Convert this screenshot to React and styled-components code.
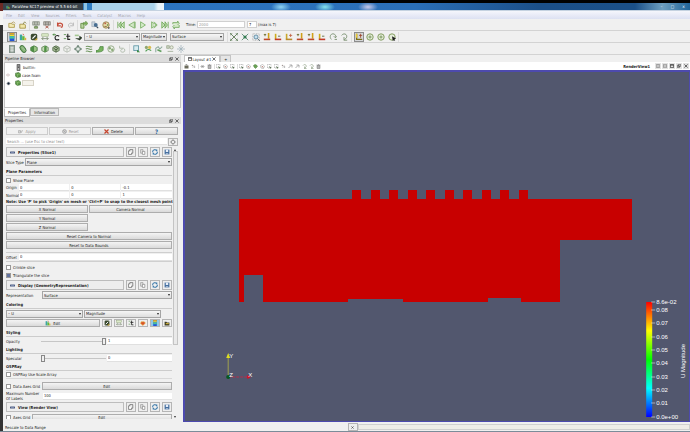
import React, { useState } from 'react';
import styled, { createGlobalStyle, css } from 'styled-components';

const GlobalStyle = createGlobalStyle`
    * {
        box-sizing: border-box;
    }

    body {
        margin: 0;
        overflow: hidden;
    }

    body, button, input, select {
        font-family: "DejaVu Sans Condensed", "DejaVu Sans", sans-serif;
        font-size: 4px;
        line-height: 5px;
        color: #222222;
    }
`;

/* ---------- icons, all on a 10x10 grid ---------- */

const drawings = {
    open: <><path d="M1 8V3h3l1 1h3v4z" fill="#f3e9b4" stroke="#a89545" /><path d="M4 3l3-2 2 2" fill="none" stroke="#b09a55" /></>,
    openUp: <><path d="M1 9V4h6l1 1v4z" fill="#f0e6a8" stroke="#a08c3c" /><path d="M5 4l2-3 2 2" fill="none" stroke="#84803c" /></>,
    connect: <><rect x="1" y="1" width="8" height="4" fill="#d8ddd2" stroke="#7d8479" /><path d="M3 1v4M5 1v4M7 1v4M5 5v2" stroke="#7d8479" /><path d="M3 7h4v2H3z" fill="#98b77a" stroke="#66804f" /></>,
    disconnect: <><rect x="1" y="1" width="8" height="4" fill="#d4d2cc" stroke="#77756d" /><path d="M3 1v4M5 1v4M7 1v4" stroke="#77756d" /><path d="M3 6l4 3M7 6L3 9" stroke="#a54a38" /></>,
    undo: <path d="M2 2v4h4M2 5c2-4 7-2 6 1 0 1-1 2-2 2" fill="none" stroke="#c54d3a" strokeWidth="1.6" />,
    redo: <path d="M8 2v4H4M8 5C6 1 1 3 2 6c0 1 1 2 2 2" fill="none" stroke="#b9b9b9" strokeWidth="1.2" />,
    refresh: <><path d="M1 3h4v6H1z" fill="#b9d5a0" stroke="#61883f" /><path d="M4 5V2h3V0l3 3-3 3V4" fill="#7db057" stroke="#4c7a2f" strokeWidth=".5" /></>,
    find: <><path d="M1 1h4v6H1z" fill="#c9d4de" stroke="#8695a5" strokeWidth=".6" /><circle cx="6" cy="5" r="2.4" fill="#466d91" /><path d="M7 7l2 2" stroke="#334455" strokeWidth="1.4" /></>,
    palette: <><circle cx="5" cy="5" r="4" fill="#e3d6a5" stroke="#907944" /><circle cx="4" cy="3" r="1" fill="#bb5544" /><circle cx="7" cy="5" r="1" fill="#558844" /><path d="M3 7h3" stroke="#7a6030" /><path d="M7 8h3L8.500 10z" fill="#222" /></>,
    first: <path d="M1 1v8M9 1L5 5l4 4zM5 1L2 5l3 4z" fill="#c3dfb4" stroke="#6aa552" />,
    prev: <path d="M8 1v8L1 5zM9 1v8" fill="#d2e6c6" stroke="#78ad62" />,
    play: <path d="M2 1v8l6-4z" fill="#d5ebc9" stroke="#70ab59" />,
    next: <path d="M2 1v8l6-4zM5 1l4 4-4 4" fill="#c9e2ba" stroke="#78ad62" />,
    last: <path d="M9 1v8M1 1l4 4-4 4zM5 1l3 4-3 4z" fill="#c3dfb4" stroke="#6aa552" />,
    loop: <path d="M1 4V2h6V0l2 3-2 2M9 5v3H3v2L1 7l2-2" fill="#d3e8c5" stroke="#70a65b" />,
    bar: <><rect x="2" y="0" width="6" height="10" fill="#2456d6" /><rect x="2" y="0" width="6" height="2" fill="#d8a028" /><rect x="2" y="2" width="6" height="2" fill="#f3dc2c" /><rect x="2" y="4" width="6" height="3" fill="#43c4a0" /></>,
    chart: <><rect x="1" y="2" width="3" height="7" fill="#3ca6a0" /><rect x="4" y="4" width="3" height="5" fill="#62b93d" /><rect x="7" y="6" width="2" height="3" fill="#e0b03a" /><path d="M5 1l1 2" stroke="#cf4f2c" /></>,
    edit: <><rect x="1" y="1" width="8" height="8" rx="2" fill="#3b4a30" /><path d="M3 7l4-4" stroke="#ffffff" strokeWidth="1.6" /><path d="M5 9h4V6z" fill="#c8a53a" /></>,
    range: <><rect x="1" y="1" width="8" height="3" fill="#dcebc9" stroke="#8da276" strokeWidth=".7" /><path d="M1 7h8M3 5L1 7l2 2M7 5l2 2-2 2" fill="none" stroke="#73856a" /></>,
    rangeC: <><path d="M1 2h4M1 2l2-1M1 2l2 1" stroke="#4e8b42" /><path d="M9 4c-3-2-6 0-5 3 0 2 3 2 5 1" fill="none" stroke="#1d1d1d" strokeWidth="1.4" /></>,
    rangeT: <><path d="M1 2h3M1 7h3" stroke="#4e8b42" /><path d="M6 1v7h3M4 4h5" fill="none" stroke="#252525" strokeWidth="1.4" /></>,
    rangeV: <><rect x="1" y="2" width="5" height="2" fill="#a4c791" /><path d="M2 7h5V4l3 2-3 3" fill="#2b3927" stroke="#2b3927" strokeWidth=".7" /></>,
    calc: <><rect x="2" y="0" width="6" height="10" fill="#9faba2" stroke="#6f7f78" /><path d="M3 3h4M3 5h4M3 7h4M5 2v7" stroke="#e8eeea" strokeWidth=".8" /></>,
    contour: <><ellipse cx="5" cy="5" rx="3" ry="5" transform="rotate(-35 5 5)" fill="#75a866" stroke="#3f6f3c" /><path d="M3 3l4 5M4 2l4 5" stroke="#d5e8cb" strokeWidth=".6" /></>,
    clip: <><path d="M1 3l4-2 4 2v4L5 9 1 7z" fill="#9bc484" stroke="#3f7339" /><path d="M5 1v8L1 7V3z" fill="#4e8d46" /></>,
    slice: <><path d="M1 3l4-2 4 2v4L5 9 1 7z" fill="#c8dbbb" stroke="#56814b" /><path d="M4 2l3-1v7L4 9z" fill="#4f9143" /></>,
    threshold: <><path d="M1 3l4-2 4 2v4L5 9 1 7z" fill="#a8bc98" stroke="#526b48" /><path d="M2 4l3 2 3-2M5 6v3M3 2l4 2" stroke="#37502d" fill="none" /></>,
    subset: <path d="M1 3l4-2 4 2v4L5 9 1 7zM1 3l4 2 4-2M5 5v4" fill="#eef0ec" stroke="#a7aea3" strokeWidth=".8" />,
    glyph: <><circle cx="5" cy="5" r="3" fill="#e4ebe6" stroke="#5f7868" /><path d="M5 0v3M5 7v3M0 5h3M7 5h3" stroke="#55705f" strokeWidth="1.4" /></>,
    stream: <path d="M1 2c3-2 5 2 8 0M1 5c3-2 5 2 8 0M1 8c3-2 5 2 8 0" fill="none" stroke="#6f9560" strokeWidth="1.3" />,
    warp: <><path d="M0 7c3 0 4-1 5-5h4v4c0 2-4 3-9 3z" fill="#76b35e" stroke="#3f7a35" strokeWidth=".8" /></>,
    group: <><circle cx="5" cy="5" r="4" fill="#edf2ea" stroke="#859d76" /><circle cx="3.500" cy="4" r="1.500" fill="#87a974" /><circle cx="6.500" cy="6" r="1.500" fill="#87a974" /></>,
    level: <path d="M2 1v3h3M5 4c4-1 5 5 1 5s-3-4 0-4" fill="none" stroke="#a7b4a2" />,
    select: <><rect x="1" y="1" width="6" height="6" fill="#d8ebef" stroke="#5991a0" /><path d="M5 6l4 3H5z" fill="#3d8b42" /></>,
    probe: <><circle cx="3" cy="3" r="2" fill="#91a66f" /><circle cx="7" cy="3" r="2" fill="#d8bc50" /><path d="M2 8c2-3 4-3 7-1" fill="none" stroke="#4d9c50" strokeWidth="1.4" /></>,
    plot: <><path d="M1 9V4l3-2 2 3 3-3" fill="none" stroke="#8ca99c" strokeWidth="1.3" /><path d="M3 6l5 2" stroke="#609e5e" strokeWidth="2" /></>,
    group2: <><rect x="1" y="1" width="3" height="3" fill="#d7ddd0" stroke="#92a182" /><circle cx="7" cy="3" r="2" fill="#e9eddf" stroke="#9ba58c" /><path d="M2 8h7" stroke="#9aa992" /></>,
    cross: <path d="M5 0v10M0 5h10M2 2l6 6M8 2L2 8" stroke="#9fb1ba" strokeWidth=".9" />,
    reset: <><path d="M1 1l8 8M9 1L1 9" stroke="#68835f" strokeWidth="1.2" /><path d="M0 3V0h3M7 0h3v3M10 7v3H7M3 10H0V7" fill="none" stroke="#3f6637" /></>,
    zoomData: <><path d="M1 1l8 8M9 1L1 9" stroke="#63927b" strokeWidth="1.2" /><circle cx="5" cy="5" r="2" fill="#347d52" /></>,
    zoomBox: <><path d="M1 1h8v8H1z" fill="none" stroke="#999999" strokeDasharray="1 1" /><circle cx="5" cy="5" r="2.500" fill="#c8e0ee" stroke="#4f8099" /><path d="M7 7l3 3" stroke="#4c6470" /></>,
    axisA: <><path d="M1 2h3M2.500 1v3" stroke="#666622" /><path d="M7 0v7" stroke="#d0a018" strokeWidth="2" /><path d="M1 8h8" stroke="#bd4a2b" strokeWidth="2" /></>,
    axisB: <><path d="M2 1v7" stroke="#ceac1e" strokeWidth="2" /><path d="M5 4h3" stroke="#4d5a2c" /><path d="M1 8h8" stroke="#c33a28" strokeWidth="2" /></>,
    axisC: <><path d="M2 1v7" stroke="#c9a82c" strokeWidth="2" /><path d="M1 8h8" stroke="#b98a30" strokeWidth="2" /><path d="M5 3h4M7 1v4" stroke="#bf5a3b" /></>,
    rotL: <path d="M7 8h3M3 8C0 5 2 1 5 1s4 3 3 5M6 4l2 2 2-2" fill="none" stroke="#819577" strokeWidth="1.2" />,
    rotR: <path d="M2 3c3-4 8-1 6 3L5 9M5 5v4h4" fill="none" stroke="#819577" strokeWidth="1.2" />,
    axes: <><path d="M2 1v7h7" fill="none" stroke="#7b6e19" strokeWidth="1.6" /><path d="M2 1v5" stroke="#e8c733" strokeWidth="2" /><path d="M5 3h4M7 1v5" stroke="#993d22" /></>,
    center: <><circle cx="5" cy="5" r="4" fill="#e5eddb" stroke="#809a5c" strokeWidth="1.2" /><path d="M3 5h4M5 3v4" stroke="#6b8a4b" /></>,
    pick: <><circle cx="5" cy="5" r="4" fill="#e5eddb" stroke="#809a5c" strokeWidth="1.2" /><path d="M5 4l5 3-2 1 1 2-2-1-1 1z" fill="#1e1e1e" /></>,
    server: <><rect x="3" y="1" width="4" height="8" fill="#bbbbbb" stroke="#333333" /><path d="M4 3h2M4 5h2" stroke="#333333" /></>,
    cube: <><path d="M1 2l5-1 3 2v5L4 9 1 7z" fill="#5e9a48" stroke="#35682a" /><path d="M1 2l3 2v5M4 4l5-1" fill="none" stroke="#a7d08c" strokeWidth=".8" /></>,
    eye: <><path d="M1 5c2-4 6-4 8 0-2 4-6 4-8 0z" fill="#ffffff" stroke="#777777" strokeWidth=".6" /><circle cx="5" cy="5" r="2.400" fill="#142436" /></>,
    hidden: <path d="M1 5c2-3 6-3 8 0-2 3-6 3-8 0z" fill="#ffffff" stroke="#b59a9a" strokeWidth="1.400" />,
    apply: <path d="M1 3h4v5H1zM5 5l2 2 2-5" fill="#d7d7d7" stroke="#9b9b9b" />,
    stop: <><circle cx="5" cy="5" r="4" fill="#cccccc" stroke="#8d8d8d" /><path d="M3 3l4 4" stroke="#8d8d8d" /></>,
    remove: <path d="M1 1l8 8M9 1L1 9" stroke="#c6442c" strokeWidth="2.400" />,
    gear: <><circle cx="5" cy="5" r="3" fill="none" stroke="#888888" strokeWidth="1.500" /><path d="M5 0v2M5 8v2M0 5h2M8 5h2" stroke="#888888" /></>,
    copy: <><path d="M1 3h5v6H1z" fill="#ffffff" stroke="#444444" /><path d="M3 3V1h5v6H6" fill="#eeeeee" stroke="#444444" /></>,
    paste: <><path d="M1 1h4v6H1z" fill="#e4e4e4" stroke="#8b8b8b" /><path d="M4 4h4v5H4z" fill="#ffffff" stroke="#737373" /></>,
    sync: <path d="M1 5c0-4 5-5 7-2V1M9 5c0 4-5 5-7 2v2" fill="none" stroke="#3777a9" strokeWidth="1.700" />,
    save: <><path d="M1 1h8v8H1z" fill="#466f9f" /><path d="M3 1h4v4H3z" fill="#e6eef8" /><path d="M3 7h4v2H3z" fill="#b7c9de" /></>,
    minus: <><rect x="0" y="3" width="10" height="4" rx="1" fill="#4b5a80" /><path d="M2 5h6" stroke="#a9b7d7" /></>,
    heart: <path d="M2 3h5l2 2-4 4-4-3z" fill="#d8502a" stroke="#e5b23a" />,
    folder: <><path d="M1 3h3l1 1h4v5H1z" fill="#3d3c22" /><path d="M3 5h5v2H3z" fill="#c9ab3a" /></>,
    float: <path d="M3 1h6v5H3zM1 4h5v5H1z" fill="#ffffff" stroke="#222222" strokeWidth="1.300" />,
    close: <path d="M1 1l8 8M9 1L1 9" stroke="#222222" strokeWidth="1.600" />,
    window: <path d="M1 1h8v8H1zM1 3h8" fill="none" stroke="#222222" strokeWidth="1.600" />,
    splitH: <path d="M1 1h8v8H1zM5 1v8" fill="none" stroke="#666666" strokeWidth="1.200" />,
    splitV: <path d="M1 1h8v8H1zM1 5h8" fill="none" stroke="#666666" strokeWidth="1.200" />,
    camera: <><path d="M1 3h8v6H1z" fill="#6b6b5b" /><path d="M3 1h3v2" fill="none" stroke="#555555" /></>,
    dots: <><circle cx="3" cy="3" r="1.500" fill="#a49a97" /><circle cx="7" cy="6" r="1.500" fill="#9b9b9b" /><path d="M3 8l4-6" stroke="#bbbbbb" /></>,
    link: <path d="M1 5h3M6 5h3M3 2l4 6M7 2L3 8" stroke="#828282" strokeWidth="1.200" />,
    selBox: <><path d="M1 1h7v7H1z" fill="none" stroke="#858585" strokeDasharray="2 1" /><path d="M4 4l5 4-3 1z" fill="#3e5b38" /></>,
    selPoly: <><path d="M1 3l4-2 4 3-2 5-5-1z" fill="none" stroke="#8c8c8c" /><path d="M4 4l2 3" stroke="#a04f42" strokeWidth="1.500" /></>,
    selGreen: <path d="M1 3l3-2 3 1 2 3-4 4-3-3z" fill="#6ba357" stroke="#4c803b" />,
    arrow: <path d="M1 8l5-5M3 2h5v5" fill="none" stroke="#777777" strokeWidth="1.200" />,
    trash: <path d="M2 3h6v6H2zM1 2h8M4 1h2" fill="#b5b5b5" stroke="#777777" />,
};

const Glyph = styled.svg`
    display: block;
    flex: none;
    width: ${(p) => p.$size}px;
    height: ${(p) => p.$size}px;
`;

function Icon({ name, size = 8 }) {
    return <Glyph $size={size} viewBox="0 0 10 10" aria-hidden="true">{drawings[name]}</Glyph>;
}

/* ---------- window frame ---------- */

const Desktop = styled.div`
    display: flex;
    flex-direction: column;
    height: 100vh;
    padding-left: 3px;
    border-top: 3px solid #000000;
    border-bottom: 1px solid #7b8c99;
    background: linear-gradient(#6d2a25 0 8px, #f3f3f3 8px 22px, #333333 22px);
`;

const TitleBar = styled.header`
    display: flex;
    flex: none;
    align-items: center;
    height: 8px;
    background:
        radial-gradient(ellipse 10px 5px at 278px 4px, #8fd3f0, transparent),
        radial-gradient(ellipse 10px 5px at 322px 4px, #85e4ee, transparent),
        radial-gradient(ellipse 10px 5px at 365px 4px, #c8c9ea, transparent),
        linear-gradient(90deg, #3d82be 0 84px, #2c74bf 160px, #2b6fb8 60%, #1b4f89 78%, #1b5088 92%, #6d9fc0 96%, #1f6398);
    border-bottom: 1px solid #c5d2e0;
`;

const AppTitle = styled.h1`
    display: flex;
    align-items: center;
    gap: 2px;
    width: 80px;
    height: 7px;
    margin: 0;
    padding-left: 3px;
    background: #39424a;
    color: #ffffff;
    font-size: 4px;
    font-weight: normal;
    white-space: nowrap;
`;

const BrowserTab = styled.div`
    width: 80px;
    height: 7px;
    margin-left: 1px;
    background: linear-gradient(90deg, #8fc4e4 0 3px, #2f7dc2 3px 8px, #a9d2ea 8px 70px, #e9f4fa 74px);
`;

const WindowButtons = styled.div`
    display: flex;
    gap: 4px;
    margin-left: auto;
    padding-right: 3px;
`;

const WindowButton = styled.button`
    width: 7px;
    height: 6px;
    padding: 0;
    border: 0;
    background: none;
    color: #ffffff;
`;

const MenuBar = styled.nav`
    display: flex;
    flex: none;
    align-items: center;
    gap: 6px;
    height: 8px;
    padding-left: 3px;
    background: linear-gradient(#f5f6fc, #dde1f2);
`;

const MenuItem = styled.a`
    color: #a3a5ae;
    text-decoration: none;
`;

const ToolBar = styled.div`
    display: flex;
    flex: none;
    align-items: center;
    gap: 1px;
    height: 12px;
    padding-left: 4px;
    background: #f0f0f0;
    border-bottom: 1px solid #d3d3d3;
`;

const ToolButton = styled.button`
    display: flex;
    align-items: center;
    justify-content: center;
    width: 10px;
    height: 10px;
    padding: 0;
    border: 1px solid ${(p) => (p.$pressed ? '#8c8c8c' : 'transparent')};
    background: ${(p) => (p.$pressed ? '#d4d6d8' : 'none')};
`;

const Divider = styled.span`
    width: 1px;
    height: ${(p) => (p.$low ? 5 : 10)}px;
    margin: 0 ${(p) => (p.$wide ? 1 : 0)}px;
    background: #dcdcdc;
`;

const TimeLabel = styled.label`
    display: flex;
    align-items: center;
    gap: 1px;
    padding: 0 1px 0 4px;
`;

const field = css`
    height: 7px;
    min-width: 0;
    padding: 0 1px;
    border: 0;
    background: #ffffff;
`;

const TimeInput = styled.input`
    ${field}
    width: 48px;
    border: 1px solid #d0d0d0;
    color: #999999;
`;

const StepInput = styled.input`
    ${field}
    width: 10px;
    border: 1px solid #d0d0d0;
`;

const ComboShell = styled.span`
    position: relative;
    display: flex;
    flex: ${(p) => (p.$width ? 'none' : '1')};
    width: ${(p) => (p.$width ? `${p.$width}px` : 'auto')};
    margin-right: ${(p) => p.$after || 0}px;

    &::after {
        content: '';
        position: absolute;
        top: 3px;
        right: 2px;
        border: 1px solid transparent;
        border-top: 2px solid #222222;
        border-bottom: 0;
    }
`;

const ComboSelect = styled.select`
    appearance: none;
    width: 100%;
    height: 8px;
    padding: 0 1px;
    border: 1px solid #a5a5a5;
    border-radius: 0;
    background: linear-gradient(#f6f6f6, #dedede);
`;

function Combo({ label, value, width, after, id }) {
    return (
        <ComboShell $width={width} $after={after}>
            <ComboSelect id={id} aria-label={label} defaultValue={value}>
                <option>{value}</option>
            </ComboSelect>
        </ComboShell>
    );
}

function Tools({ names, pressed }) {
    return names.map((name, i) => {
        if (name === '|' || name === '||') {
            return <Divider key={i} $wide={name === '||'} />;
        }
        return <ToolButton key={i} $pressed={name === pressed} aria-label={name}><Icon name={name} /></ToolButton>;
    });
}

const Workspace = styled.main`
    display: flex;
    flex: 1;
    min-height: 0;
    background: #f0f0f0;
`;

/* ---------- left dock ---------- */

const Dock = styled.aside`
    display: flex;
    flex-direction: column;
    width: 26%;
    min-width: 178px;
    padding: 0 1px;
`;

const DockTitle = styled.h2`
    display: flex;
    flex: none;
    align-items: center;
    gap: 2px;
    height: 7px;
    margin: 0;
    padding: 0 2px 0 1px;
    background: #dcdcdc;
    font-size: 4px;
    font-weight: normal;

    span {
        flex: 1;
    }
`;

const Tree = styled.ul`
    flex: none;
    height: 46px;
    margin: 0;
    padding: 0 0 0 1px;
    list-style: none;
    background: #ffffff;
    border: 1px solid #c4c4c4;
`;

const TreeItem = styled.li`
    display: flex;
    align-items: center;
    gap: 1px;
    height: 8px;
`;

const EyeSlot = styled.span`
    width: 8px;
`;

const BlankName = styled.span`
    width: 12px;
    height: 6px;
    border: 1px solid #d8d4c8;
    background: #f5f3ec;
`;

const Tabs = styled.div`
    display: flex;
    flex: none;
    height: 9px;
    align-items: flex-start;
`;

const Tab = styled.button`
    height: ${(p) => (p.$active ? 9 : 8)}px;
    padding: 0 3px;
    border: 1px solid #b9b9b9;
    border-top-color: ${(p) => (p.$active ? '#ffffff' : '#b9b9b9')};
    background: ${(p) => (p.$active ? '#ffffff' : '#e6e6e6')};
`;

const Actions = styled.div`
    display: flex;
    flex: none;
    gap: 1px;
    padding: 3px 3px 2px 2px;
`;

const PushButton = styled.button`
    display: flex;
    flex: 1;
    align-items: center;
    justify-content: center;
    gap: 2px;
    height: 8px;
    padding: 0;
    border: 1px solid #adadad;
    background: linear-gradient(#f4f4f4, #dadada);
    color: #222222;

    &:disabled {
        border-color: #cccccc;
        background: #f1f1f1;
        color: #9a9a9a;
    }
`;

const HelpButton = styled(PushButton)`
    color: #2f6a9c;
    font-size: 6px;
    font-weight: bold;
`;

const SearchRow = styled.div`
    display: flex;
    flex: none;
    align-items: center;
    gap: 1px;
    height: 9px;
    padding: 0 3px 0 2px;
`;

const Field = styled.input`
    ${field}
    flex: 1;
    width: 0;
    border-bottom: 1px solid #e0e0e0;

    &::placeholder {
        color: #8a8a8a;
    }
`;

const ScrollArea = styled.div`
    display: flex;
    flex: 1;
    min-height: 0;
    margin-bottom: 4px;
    padding-right: 3px;
    overflow: hidden;
`;

const Form = styled.form`
    flex: 1;
    min-width: 0;
    padding: 1px 1px 0 2px;
`;

const ScrollTrack = styled.div`
    display: flex;
    flex-direction: column;
    align-items: center;
    justify-content: space-between;
    width: 5px;
    padding: 3px 0 1px;
`;

const Arrow = styled.i`
    border: 1px solid transparent;
    border-${(p) => (p.$up ? 'bottom' : 'top')}: 2px solid #333333;
    border-${(p) => (p.$up ? 'top' : 'bottom')}: 0;
`;

const Thumb = styled.div`
    width: 5px;
    height: 72%;
    margin-bottom: auto;
    border: 1px solid #c4c4c4;
    background: #e9e9e9;
`;

const SectionRow = styled.div`
    display: flex;
    gap: 2px;
    height: 10px;
    margin-top: ${(p) => p.$top || 0}px;
`;

const SectionTitle = styled.h3`
    display: flex;
    flex: 1;
    align-items: center;
    gap: 3px;
    margin: 0;
    padding-left: 3px;
    border: 1px solid #bdbdbd;
    background: #eeeeee;
    font-size: 4px;
`;

const SmallButton = styled.button`
    display: flex;
    align-items: center;
    justify-content: center;
    width: 10px;
    height: ${(p) => (p.$low ? 8 : 10)}px;
    padding: 0;
    border: 1px solid #b5b5b5;
    background: ${(p) => (p.$lit ? '#8fc8e8' : '#eeeeee')};
`;

const Row = styled.div`
    display: flex;
    align-items: center;
    gap: ${(p) => p.$gap || 1}px;
    height: ${(p) => p.$h || 8}px;
    margin-top: ${(p) => p.$top || 0}px;
`;

const OffsetRow = styled(Row)`
    border-top: 1px solid #cfcfcf;
    border-bottom: 1px solid #cfcfcf;
`;

const RuledRow = styled(Row)`
    border-bottom: 1px solid #d8d8d8;
`;

const Caption = styled.label`
    flex: none;
    width: ${(p) => (p.$width ? `${p.$width}px` : 'auto')};
`;

const Heading = styled.h4`
    height: 8px;
    margin: 1px 0 0;
    border-bottom: 1px solid #cccccc;
    font-size: 4px;
    line-height: 7px;
`;

const Note = styled.p`
    height: 6px;
    margin: 0;
    font-weight: bold;
    white-space: nowrap;
`;

const ButtonGrid = styled.div`
    display: grid;
    grid-template-columns: 1fr 1fr;
    gap: 1px;
`;

const WideButton = styled(PushButton)`
    grid-column: 1 / -1;
`;

const FirstColumnButton = styled(PushButton)`
    grid-column: 1;
`;

const CheckLabel = styled.label`
    display: flex;
    flex: none;
    align-items: center;
    gap: 2px;
    width: ${(p) => (p.$width ? `${p.$width}px` : 'auto')};
`;

const CheckBox = styled.input`
    appearance: none;
    width: 5px;
    height: 5px;
    margin: 0;
    border: 1px solid #999999;
    background: #ffffff;

    &:checked {
        background: #6474a0;
    }
`;

const Slider = styled.input`
    appearance: none;
    flex: none;
    width: 65px;
    height: 7px;
    margin: 0;
    background: linear-gradient(transparent 3px, #c6c6c6 3px 4px, transparent 4px);

    &::-webkit-slider-thumb {
        appearance: none;
        width: 4px;
        height: 7px;
        border: 1px solid #888888;
        background: #f0f0f0;
    }
`;

function Section({ title, top }) {
    return (
        <SectionRow $top={top}>
            <SectionTitle><Icon name="minus" size={5} />{title}</SectionTitle>
            {['copy', 'paste', 'sync', 'save'].map((name) => (
                <SmallButton type="button" key={name} aria-label={name}><Icon name={name} size={6} /></SmallButton>
            ))}
        </SectionRow>
    );
}

function Check({ label, width, defaultChecked }) {
    return (
        <CheckLabel $width={width}>
            <CheckBox type="checkbox" defaultChecked={defaultChecked} />
            {label}
        </CheckLabel>
    );
}

function VectorRow({ label, values, h }) {
    return (
        <Row $h={h}>
            <Caption $width={12}>{label}</Caption>
            {values.map((v, i) => <Field key={i} aria-label={`${label} ${'XYZ'[i]}`} defaultValue={v} />)}
        </Row>
    );
}

function SliderRow({ label, initial }) {
    const [value, setValue] = useState(initial);
    const change = (e) => setValue(e.target.value);
    return (
        <Row>
            <Caption $width={34} htmlFor={label}>{label}</Caption>
            <Slider id={label} type="range" min="0" max="1" step="0.01" value={value} onChange={change} />
            <Field aria-label={`${label} value`} value={value} onChange={change} />
        </Row>
    );
}

function PropertiesForm() {
    return (
        <Form>
            <Section title="Properties (Slice1)" />
            <Row $h={10}>
                <Caption htmlFor="slice-type">Slice Type</Caption>
                <Combo id="slice-type" value="Plane" />
            </Row>
            <Heading>Plane Parameters</Heading>
            <Row><Check label="Show Plane" /></Row>
            <VectorRow label="Origin" values={['0', '0', '-0.1']} h={7} />
            <VectorRow label="Normal" values={['0', '0', '1']} h={8} />
            <Note>Note: Use 'P' to pick 'Origin' on mesh or 'Ctrl+P' to snap to the closest mesh point</Note>
            <ButtonGrid>
                <PushButton type="button">X Normal</PushButton>
                <PushButton type="button">Camera Normal</PushButton>
                <FirstColumnButton type="button">Y Normal</FirstColumnButton>
                <FirstColumnButton type="button">Z Normal</FirstColumnButton>
                <WideButton type="button">Reset Camera to Normal</WideButton>
                <WideButton type="button">Reset to Data Bounds</WideButton>
            </ButtonGrid>
            <OffsetRow $h={10} $top={3}>
                <Caption $width={12} htmlFor="offset">Offset</Caption>
                <Field id="offset" defaultValue="0" />
            </OffsetRow>
            <Row $top={1}><Check label="Crinkle slice" /></Row>
            <Row><Check label="Triangulate the slice" defaultChecked /></Row>

            <Section title="Display (GeometryRepresentation)" top={1} />
            <Row $h={10}>
                <Caption $width={35} htmlFor="representation">Representation</Caption>
                <Combo id="representation" value="Surface" />
            </Row>
            <Heading>Coloring</Heading>
            <Row $h={9}>
                <Combo label="Color array" value="◦ U" width={77} />
                <Combo label="Component" value="Magnitude" width={77} />
            </Row>
            <Row $h={10} $gap={2}>
                <PushButton type="button"><Icon name="chart" size={6} />Edit</PushButton>
                {['edit', 'range', 'rangeT', 'heart', 'bar', 'folder'].map((name) => (
                    <SmallButton type="button" $low key={name} $lit={name === 'bar'} aria-label={name}>
                        <Icon name={name} size={6} />
                    </SmallButton>
                ))}
            </Row>
            <Heading>Styling</Heading>
            <SliderRow label="Opacity" initial="1" />
            <Heading>Lighting</Heading>
            <SliderRow label="Specular" initial="0" />
            <Heading>OSPRay</Heading>
            <RuledRow><Check label="OSPRay Use Scale Array" /></RuledRow>
            <Row $top={3}>
                <Check label="Data Axes Grid" width={35} />
                <PushButton type="button">Edit</PushButton>
            </Row>
            <Row $h={12}>
                <Caption $width={36} htmlFor="labels">Maximum Number Of Labels</Caption>
                <Field id="labels" defaultValue="100" />
            </Row>
            <Section title="View (Render View)" />
            <Row $h={9} $top={1}>
                <Check label="Axes Grid" width={25} />
                <PushButton type="button">Edit</PushButton>
            </Row>
        </Form>
    );
}

/* ---------- render view ---------- */

const ViewColumn = styled.section`
    display: flex;
    flex: 1;
    flex-direction: column;
    min-width: 0;
    padding: 0 0 1px 1px;
`;

const LayoutTabs = styled.div`
    display: flex;
    flex: none;
    align-items: flex-end;
    height: 7px;
    padding-left: 1px;
`;

const LayoutTab = styled.button`
    display: flex;
    align-items: center;
    justify-content: center;
    gap: 1px;
    height: 7px;
    min-width: 11px;
    padding: 0 3px;
    border: 1px solid #c4c4c4;
    border-bottom: 0;
    background: ${(p) => (p.$active ? '#ffffff' : '#e5e5e5')};
`;

const ViewTools = styled.div`
    display: flex;
    flex: none;
    align-items: center;
    gap: 1px;
    height: 8px;
    padding: 0 1px;
    background: #ffffff;
`;

const TinyButton = styled.button`
    display: flex;
    align-items: center;
    justify-content: center;
    width: 6px;
    height: 6px;
    padding: 0;
    border: 0;
    background: ${(p) => (p.$raised ? '#e2e2e2' : 'none')};
`;

const ViewName = styled.strong`
    margin-left: auto;
    padding-right: 4px;
`;

const Viewport = styled.div`
    flex: 1;
    min-height: 0;
    border: 2px solid #4d4aae;
    border-width: 2px 1px 1px 2px;
    background: #52576e;
`;

const Scene = styled.svg`
    display: block;
    width: 100%;
    height: 100%;
    font-family: "Liberation Sans", Arial, sans-serif;
    font-size: 6px;
    fill: #ffffff;
`;

const teeth = [352, 371, 389, 408, 426, 445, 463, 482, 500, 519];

const ticks = [
    ['8.6e-02', 302], ['0.08', 310], ['0.07', 323], ['0.06', 337], ['0.05', 350],
    ['0.04', 363], ['0.03', 377], ['0.02', 390], ['0.01', 403], ['0.0e+00', 417],
];

function RenderScene() {
    return (
        <Scene viewBox="185 72 504 349" role="img" aria-label="U Magnitude on slice">
            <defs>
                <linearGradient id="rainbow" x1="0" y1="0" x2="0" y2="1">
                    <stop offset="0" stopColor="#ff0000" />
                    <stop offset=".25" stopColor="#ffff00" />
                    <stop offset=".5" stopColor="#00ff00" />
                    <stop offset=".75" stopColor="#00ffff" />
                    <stop offset="1" stopColor="#0000ff" />
                </linearGradient>
            </defs>
            <g fill="#c80000" shapeRendering="crispEdges">
                <path d="M239 199H632V240H560V302H521V298H488V302H403V299H348V302H263V275H244V302H239z" />
                {teeth.map((x) => <rect key={x} x={x} y="190" width="9" height="10" />)}
            </g>

            <path d="M228 377V358" stroke="#a0a04e" />
            <path d="M228 377H248" stroke="#b32f4a" strokeDasharray="3 1" />
            <path d="M226 358l2-5 2 5z" fill="#dede20" />
            <path d="M247 375l4 2-4 2z" fill="#d80f22" />
            <circle cx="228" cy="377" r="2" fill="#07581f" />
            <text x="229" y="358">Y</text>
            <text x="229" y="377">Z</text>
            <text x="248" y="377">X</text>

            <rect x="646" y="302" width="6" height="115" fill="url(#rainbow)" />
            {ticks.map(([label, y]) => (
                <g key={label}>
                    <path d={`M651 ${y}h4`} stroke="#e8e8e8" strokeWidth=".6" />
                    <text x="656" y={y + 2}>{label}</text>
                </g>
            ))}
            <text transform="translate(685 378) rotate(-90)">U Magnitude</text>
        </Scene>
    );
}

const viewTools = [
    'camera', 'dots', '|', 'link', 'trash', '|', 'selBox', 'selPoly', 'selBox', '|', 'selBox', 'selPoly', 'selGreen',
    'selPoly', 'selBox', 'selBox', 'dots', 'arrow', 'arrow', 'rotR', 'rotR', 'trash',
];

const StatusBar = styled.footer`
    display: flex;
    flex: none;
    align-items: center;
    height: 8px;
    padding-left: 2px;
    background: #f0f0f0;
`;

const StatusText = styled.span`
    width: 50%;
`;

const Progress = styled.progress`
    appearance: none;
    flex: 1;
    height: 6px;
    border: 1px solid #d0d0d0;

    &::-webkit-progress-bar {
        background: #efede8;
    }
`;

const menus = ['File', 'Edit', 'View', 'Sources', 'Filters', 'Tools', 'Catalyst', 'Macros', 'Help'];

function App() {
    return (
        <Desktop>
            <GlobalStyle />
            <TitleBar>
                <AppTitle><Icon name="chart" size={4} />ParaView SC17 preview of 5.5 64-bit</AppTitle>
                <BrowserTab />
                <WindowButtons>
                    <WindowButton aria-label="Minimize">–</WindowButton>
                    <WindowButton aria-label="Maximize">□</WindowButton>
                    <WindowButton aria-label="Close">×</WindowButton>
                </WindowButtons>
            </TitleBar>
            <MenuBar>
                {menus.map((m) => <MenuItem key={m} href="#">{m}</MenuItem>)}
            </MenuBar>
            <ToolBar>
                <Tools names={['open', 'openUp', '|', 'connect', 'disconnect', '|', 'undo', 'redo', '|', 'refresh', 'find', 'palette', '||', 'first', 'prev', 'play', 'next', 'last', 'loop']} />
                <TimeLabel>Time: <TimeInput defaultValue="2000" /></TimeLabel>
                <StepInput aria-label="Time step" defaultValue="7" />
                <span>(max is 7)</span>
            </ToolBar>
            <ToolBar>
                <Tools names={['bar', 'chart', 'edit', 'range', 'rangeC', 'rangeT', 'rangeV']} pressed="bar" />
                <Combo label="Color array" value="◦ U" width={56} />
                <Combo label="Component" value="Magnitude" width={26} after={2} />
                <Combo label="Representation" value="Surface" width={54} after={2} />
                <Tools
                    names={['|', 'reset', 'zoomData', 'zoomBox', 'axisA', 'axisB', 'axisC', 'axisA', 'axisA', 'axisB', 'rotL', 'rotR', '||', 'axes', 'center', 'center', 'pick', '|']}
                    pressed="axes"
                />
            </ToolBar>
            <ToolBar>
                <Tools names={['calc', 'contour', 'clip', 'slice', 'threshold', 'subset', 'glyph', 'stream', 'warp', 'group', 'level', '||', 'select', 'probe', 'plot', 'group2', 'cross']} />
            </ToolBar>
            <Workspace>
                <Dock>
                    <DockTitle><span>Pipeline Browser</span><Icon name="float" size={4} /><Icon name="close" size={4} /></DockTitle>
                    <Tree>
                        <TreeItem><EyeSlot /><Icon name="server" size={7} />builtin:</TreeItem>
                        <TreeItem><EyeSlot><Icon name="hidden" size={4} /></EyeSlot><Icon name="cube" size={6} />case.foam</TreeItem>
                        <TreeItem><EyeSlot><Icon name="eye" size={5} /></EyeSlot><Icon name="cube" size={6} /><BlankName /></TreeItem>
                    </Tree>
                    <Tabs>
                        <Tab $active>Properties</Tab>
                        <Tab>Information</Tab>
                    </Tabs>
                    <DockTitle><span>Properties</span><Icon name="float" size={4} /><Icon name="close" size={4} /></DockTitle>
                    <Actions>
                        <PushButton disabled><Icon name="apply" size={5} />Apply</PushButton>
                        <PushButton disabled><Icon name="stop" size={5} />Reset</PushButton>
                        <PushButton><Icon name="remove" size={5} />Delete</PushButton>
                        <HelpButton aria-label="Help">?</HelpButton>
                    </Actions>
                    <SearchRow>
                        <Field aria-label="Search" placeholder="Search ... (use Esc to clear text)" />
                        <SmallButton $low aria-label="Advanced"><Icon name="gear" size={6} /></SmallButton>
                    </SearchRow>
                    <ScrollArea>
                        <PropertiesForm />
                        <ScrollTrack><Arrow $up /><Thumb /><Arrow /></ScrollTrack>
                    </ScrollArea>
                </Dock>
                <ViewColumn>
                    <LayoutTabs>
                        <LayoutTab $active><Icon name="window" size={4} />Layout #1<Icon name="close" size={4} /></LayoutTab>
                        <LayoutTab aria-label="New layout">+</LayoutTab>
                    </LayoutTabs>
                    <ViewTools>
                        {viewTools.map((name, i) => (
                            name === '|' ? <Divider key={i} $low /> : <TinyButton key={i} aria-label={name}><Icon name={name} size={5} /></TinyButton>
                        ))}
                        <ViewName>RenderView1</ViewName>
                        {['splitH', 'splitV', 'window', 'float', 'close'].map((name) => (
                            <TinyButton key={name} $raised aria-label={name}><Icon name={name} size={4} /></TinyButton>
                        ))}
                    </ViewTools>
                    <Viewport><RenderScene /></Viewport>
                </ViewColumn>
            </Workspace>
            <StatusBar>
                <StatusText>Rescale to Data Range</StatusText>
                <SmallButton $low aria-label="Abort"><Icon name="close" size={3} /></SmallButton>
                <Progress value="0" max="100" aria-label="Progress" />
            </StatusBar>
        </Desktop>
    );
}

export default App;
